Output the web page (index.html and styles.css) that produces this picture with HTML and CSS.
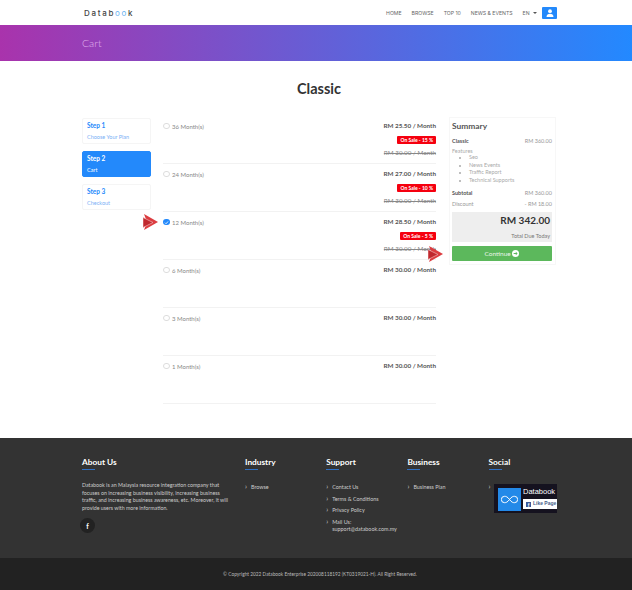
FILE: index.html
```html
<!DOCTYPE html>
<html lang="en">
<head>
    <meta charset="UTF-8">
    <title>Cart</title>
    <link rel="stylesheet" href="styles.css">
</head>
<body>
    <header class="topbar">
        <div class="logo">Datab<span class="logo-oo">oo</span>k</div>
        <nav class="nav">
            <a>HOME</a>
            <a>BROWSE</a>
            <a>TOP 10</a>
            <a>NEWS &amp; EVENTS</a>
            <a class="lang">EN <span class="caret"></span></a>
            <span class="user-btn">
                <svg viewBox="0 0 12 12" width="8" height="8"><circle cx="6" cy="3.2" r="2.9" fill="#fff"/><path d="M0.8 12 C0.8 8 3 7 6 7 C9 7 11.2 8 11.2 12Z" fill="#fff"/></svg>
            </span>
        </nav>
    </header>

    <div class="banner"><h2>Cart</h2></div>

    <main class="main">
        <h1 class="plan-title">Classic</h1>
        <div class="cart">
            <div class="steps">
                <div class="step">
                    <b>Step 1</b>
                    <span>Choose Your Plan</span>
                </div>
                <div class="step active">
                    <b>Step 2</b>
                    <span>Cart</span>
                </div>
                <div class="step">
                    <b>Step 3</b>
                    <span>Checkout</span>
                </div>
            </div>

            <div class="options">
                <div class="option">
                    <label><i class="radio"></i>36 Month(s)</label>
                    <div class="prices">
                        <b>RM 25.50 / Month</b>
                        <em class="sale">On Sale - 15 %</em>
                        <s>RM 30.00 / Month</s>
                    </div>
                </div>
                <div class="option">
                    <label><i class="radio"></i>24 Month(s)</label>
                    <div class="prices">
                        <b>RM 27.00 / Month</b>
                        <em class="sale">On Sale - 10 %</em>
                        <s>RM 30.00 / Month</s>
                    </div>
                </div>
                <div class="option">
                    <svg class="arrow arrow-left" viewBox="0 0 15 16" width="15" height="16"><path d="M1 0 L15 8 L1 16 L4 8Z" fill="#dc3c40"/><path d="M0 3.5 L10 8.5 L0 13.5Z" fill="#c0282e" stroke="#f4c4c4" stroke-width="0.6"/></svg>
                    <label><i class="radio checked"><svg viewBox="0 0 8 8" width="5" height="5"><path d="M1.5 4.2 L3.3 6 L6.5 2.3" fill="none" stroke="#fff" stroke-width="1.3"/></svg></i>12 Month(s)</label>
                    <div class="prices">
                        <b>RM 28.50 / Month</b>
                        <em class="sale">On Sale - 5 %</em>
                        <s>RM 30.00 / Month</s>
                    </div>
                    <svg class="arrow arrow-right" viewBox="0 0 15 16" width="15" height="16"><path d="M1 0 L15 8 L1 16 L4 8Z" fill="#dc3c40"/><path d="M0 3.5 L10 8.5 L0 13.5Z" fill="#c0282e" stroke="#f4c4c4" stroke-width="0.6"/></svg>
                </div>
                <div class="option">
                    <label><i class="radio"></i>6 Month(s)</label>
                    <div class="prices"><b>RM 30.00 / Month</b></div>
                </div>
                <div class="option">
                    <label><i class="radio"></i>3 Month(s)</label>
                    <div class="prices"><b>RM 30.00 / Month</b></div>
                </div>
                <div class="option">
                    <label><i class="radio"></i>1 Month(s)</label>
                    <div class="prices"><b>RM 30.00 / Month</b></div>
                </div>
            </div>

            <aside class="summary">
                <h3>Summary</h3>
                <div class="line"><b>Classic</b><span>RM 360.00</span></div>
                <div class="features">Features</div>
                <ul>
                    <li>Seo</li>
                    <li>News Events</li>
                    <li>Traffic Report</li>
                    <li>Technical Supports</li>
                </ul>
                <div class="line"><b>Subtotal</b><span>RM 360.00</span></div>
                <div class="line"><span>Discount</span><span>- RM 18.00</span></div>
                <div class="total">
                    <strong>RM 342.00</strong>
                    <span>Total Due Today</span>
                </div>
                <button class="continue">Continue
                    <svg viewBox="0 0 12 12" width="7" height="7"><circle cx="6" cy="6" r="6" fill="#fff"/><path d="M2.8 5H6.5V2.8L9.6 6L6.5 9.2V7H2.8Z" fill="#5cb85c"/></svg>
                </button>
            </aside>
        </div>
    </main>

    <footer class="footer">
        <div class="footer-cols">
            <div class="col-about">
                <h4>About Us</h4>
                <p>Databook is an Malaysia resource integration company that focuses on increasing business visibility, increasing business traffic, and increasing business awareness, etc. Moreover, it will provide users with more information.</p>
                <span class="fb-circle">f</span>
            </div>
            <div class="col">
                <h4>Industry</h4>
                <ul><li>Browse</li></ul>
            </div>
            <div class="col">
                <h4>Support</h4>
                <ul>
                    <li>Contact Us</li>
                    <li>Terms &amp; Conditions</li>
                    <li>Privacy Policy</li>
                    <li>Mail Us:<br>support@databook.com.my</li>
                </ul>
            </div>
            <div class="col">
                <h4>Business</h4>
                <ul><li>Business Plan</li></ul>
            </div>
            <div class="col">
                <h4>Social</h4>
                <ul>
                    <li>
                        <div class="fb-box">
                            <span class="fb-logo">
                                <svg viewBox="0 0 24 12" width="17" height="9"><path d="M12 6 C9 2 7 1.5 5 1.5 A4.5 4.5 0 0 0 5 10.5 C7 10.5 9 10 12 6 C15 2 17 1.5 19 1.5 A4.5 4.5 0 0 1 19 10.5 C17 10.5 15 10 12 6Z" fill="none" stroke="#fff" stroke-width="1.4"/></svg>
                            </span>
                            <div class="fb-side">
                                <span class="fb-name">Databook</span>
                                <span class="fb-like"><i>f</i>Like Page</span>
                            </div>
                        </div>
                    </li>
                </ul>
            </div>
        </div>
    </footer>
    <div class="copyright">© Copyright 2022 Databook Enterprise 202008118192 (KT0319021-H). All Right Reserved.</div>
</body>
</html>
```

FILE: styles.css
```css
* {
    box-sizing: border-box;
}

body {
    margin: 0;
    font-family: 'Lato', 'Open Sans', sans-serif;
    font-size: 5.5px;
    color: #777;
    background-color: #fff;
}

/* Barre du haut */
.topbar {
    height: 25px;
    padding: 0 75px 0 84px;
    display: flex;
    justify-content: space-between;
    align-items: center;
}

.logo {
    font-family: 'Inter', sans-serif;
    font-size: 8px;
    font-weight: 500;
    letter-spacing: 1.7px;
    color: #444;
}

.logo-oo {
    color: #6cb4f0;
    font-weight: 400;
}

.nav {
    display: flex;
    align-items: center;
    gap: 10px;
    font-family: 'Inter', sans-serif;
    font-size: 5.15px;
    color: #666;
}

.caret {
    display: inline-block;
    margin-left: 2px;
    vertical-align: middle;
    border-top: 2px solid #555;
    border-left: 2px solid transparent;
    border-right: 2px solid transparent;
}

.user-btn {
    width: 15px;
    height: 12px;
    margin-left: -5px;
    background-color: #2389fb;
    border-radius: 1px;
    display: flex;
    justify-content: center;
    align-items: center;
}

.banner {
    height: 36px;
    padding: 0 82px;
    display: flex;
    align-items: center;
    background: linear-gradient(to right, #a933ac, #2389ff);
}

.banner h2 {
    margin: 0;
    font-size: 10.5px;
    font-weight: 300;
    color: #e0b4ee;
}

/* Contenu */
.main {
    height: 377px;
    padding: 20px 76px 0 82px;
}

.plan-title {
    margin: 0 0 20px;
    height: 16px;
    line-height: 16px;
    text-align: center;
    font-size: 14.5px;
    font-weight: 700;
    color: #333;
}

.cart {
    display: grid;
    grid-template-columns: 69px 273px 108px;
    gap: 12px;
    align-items: start;
}

.steps {
    margin-top: 1px;
    display: flex;
    flex-direction: column;
    gap: 7px;
}

.step {
    height: 26px;
    padding: 3px 4px;
    border: 1px solid #f5f5f5;
    border-radius: 2px;
    display: flex;
    flex-direction: column;
    gap: 4.5px;
    color: #7ab0f5;
}

.step b {
    font-size: 6.5px;
    color: #2389fb;
}

.step.active {
    background-color: #2389fb;
    border-color: #2389fb;
    color: #fff;
}

.step.active b {
    color: #fff;
}

.options {
    margin-top: -1px;
}

.option {
    height: 48px;
    padding-top: 6px;
    border-bottom: 1px solid #f2f2f2;
    display: flex;
    justify-content: space-between;
    align-items: flex-start;
    position: relative;
}

.option label {
    display: flex;
    align-items: center;
    gap: 2.5px;
    font-size: 6px;
    color: #888;
    height: 8px;
}

.radio {
    width: 6.5px;
    height: 6.5px;
    border: 1px solid #ddd;
    border-radius: 50%;
}

.radio.checked {
    border: none;
    background-color: #2389fb;
    display: flex;
    justify-content: center;
    align-items: center;
}

.prices {
    display: flex;
    flex-direction: column;
    align-items: flex-end;
    gap: 5.5px;
    font-size: 6.3px;
    color: #666;
}

.prices b {
    line-height: 8px;
    color: #555;
}

.prices s {
    color: #888;
}

.sale {
    background-color: #f5000f;
    color: #fff;
    font-style: normal;
    font-size: 5px;
    font-weight: 700;
    padding: 1px 3px;
    border-radius: 1px;
}

.arrow {
    position: absolute;
}

.arrow-left {
    left: -20px;
    top: 2px;
}

.arrow-right {
    right: -7px;
    top: 34px;
}

/* Résumé */
.summary {
    height: 148px;
    margin-left: 1px;
    padding: 3px 3px 0 2px;
    border: 1px solid #f7f7f7;
    font-size: 5.5px;
}

.summary h3 {
    margin: 0 0 7px;
    font-size: 8.4px;
    line-height: 10px;
    color: #555;
}

.line {
    display: flex;
    justify-content: space-between;
    margin-bottom: 4px;
    line-height: 7px;
    color: #999;
}

.line b {
    color: #555;
}

.features {
    margin-top: -1px;
    line-height: 6px;
    color: #aaa;
}

.summary ul {
    margin: 0 0 6px;
    padding-left: 17px;
    line-height: 7.6px;
    color: #aaa;
}

.total {
    height: 30px;
    margin-top: 2.5px;
    padding: 2px 2px 0;
    background-color: #eee;
    display: flex;
    flex-direction: column;
    align-items: flex-end;
    gap: 7px;
}

.total strong {
    font-size: 10px;
    line-height: 12px;
    color: #333;
}

.continue {
    width: 100%;
    height: 15px;
    margin-top: 4px;
    border: none;
    border-radius: 1px;
    background-color: #5cb85c;
    color: #e8f5e8;
    font: inherit;
    font-size: 6.5px;
}

.continue svg {
    vertical-align: -1px;
}

/* Pied de page */
.footer {
    height: 120px;
    padding: 20px 0 0 82px;
    background-color: #333;
    color: #ccc;
}

.footer-cols {
    display: flex;
}

.footer h4 {
    margin: 0 0 14px;
    padding-bottom: 3px;
    font-size: 8.3px;
    line-height: 9px;
    color: #fff;
    position: relative;
}

.footer h4::after {
    content: "";
    position: absolute;
    left: 0;
    bottom: 0;
    width: 13px;
    height: 1px;
    background-color: #2f6fc4;
}

.col-about {
    width: 163px;
}

.col-about p {
    margin: -2px 0 6px;
    width: 150px;
    line-height: 7.6px;
    font-size: 5.3px;
}

.fb-circle {
    width: 15px;
    height: 15px;
    margin-left: -2px;
    border-radius: 50%;
    background-color: #222;
    color: #fff;
    font-weight: 700;
    font-size: 7px;
    display: flex;
    justify-content: center;
    align-items: center;
}

.col {
    width: 81.2px;
}

.col ul {
    margin: 0;
    padding: 0;
    list-style: none;
}

.col li {
    position: relative;
    padding-left: 6px;
    margin-bottom: 4px;
    line-height: 7.6px;
    font-size: 5.4px;
}

.col li::before {
    content: "›";
    position: absolute;
    left: 0;
    top: -1px;
    font-size: 7px;
}

.fb-box {
    width: 63px;
    height: 29px;
    margin-left: -0.6px;
    padding: 4px 0 0 4px;
    background-color: #15121f;
    display: flex;
    gap: 2px;
}

.fb-logo {
    width: 23px;
    height: 23px;
    background-color: #2389e8;
    display: flex;
    justify-content: center;
    align-items: center;
}

.fb-side {
    display: flex;
    flex-direction: column;
    gap: 3px;
    flex: 1;
}

.fb-name {
    font-family: 'Liberation Sans', sans-serif;
    font-size: 7.5px;
    line-height: 8px;
    color: #fff;
}

.fb-like {
    background-color: #fff;
    color: #4b5f8a;
    font-family: 'Liberation Sans', sans-serif;
    font-size: 5px;
    font-weight: 700;
    height: 10px;
    display: flex;
    align-items: center;
    gap: 2px;
    padding-left: 3px;
    white-space: nowrap;
    overflow: hidden;
}

.fb-like i {
    flex: none;
    width: 5px;
    height: 5px;
    background-color: #3b5998;
    color: #fff;
    font-style: normal;
    font-size: 5px;
    text-align: center;
    line-height: 6px;
}

.copyright {
    height: 32px;
    padding-left: 8px;
    background-color: #222;
    color: #bbb;
    font-size: 4.8px;
    display: flex;
    justify-content: center;
    align-items: center;
}
```
